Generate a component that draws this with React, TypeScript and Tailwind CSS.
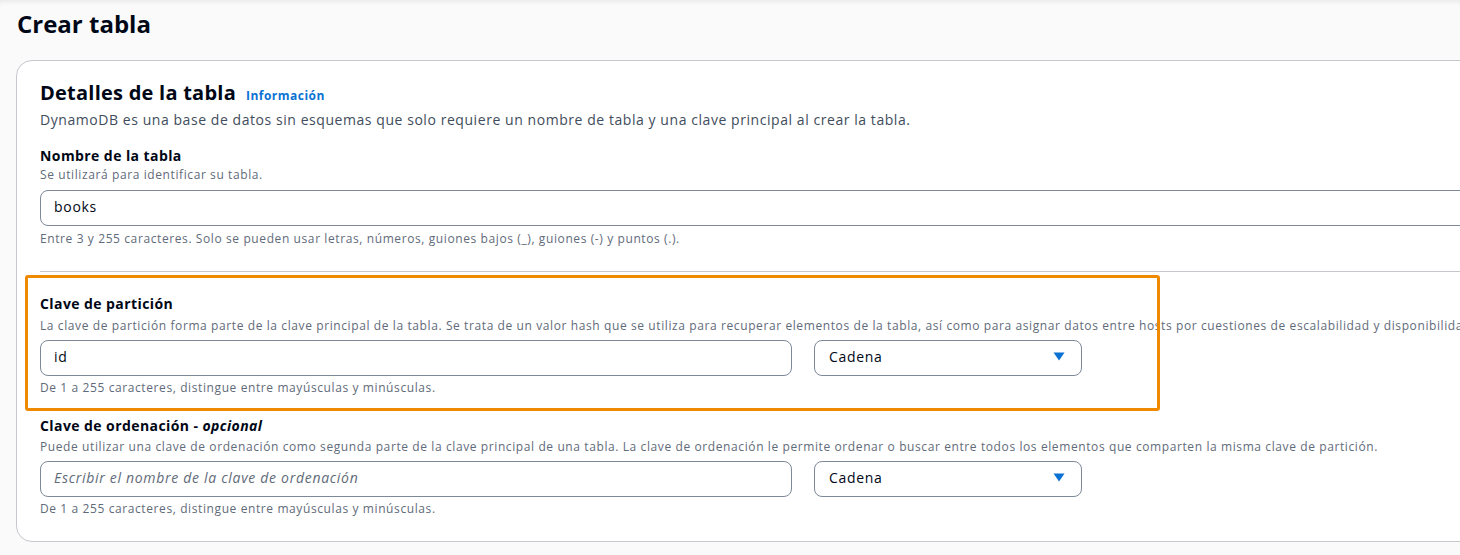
import React from "react";

const font = { fontFamily: '"Open Sans", "Noto Sans", Arial, sans-serif' };

const Caret = () => (
  <svg width="12" height="9" viewBox="0 0 12 9" className="shrink-0">
    <path d="M0.5 0.5 H11.5 L6 8.5 Z" fill="#0972d3" />
  </svg>
);

const TypeSelect = () => (
  <div className="flex h-[36px] w-[268px] items-center justify-between rounded-[8px] border border-[#7d8998] bg-white pb-[3px] pl-[14px] pr-[16px] text-[14px] tracking-[0.05em] text-[#000716]">
    <span>Cadena</span>
    <Caret />
  </div>
);

const App = () => {
  return (
    <div
      className="relative h-[555px] w-full overflow-hidden bg-[#fafafa] shadow-[inset_0_5px_5px_-3px_rgba(0,0,0,0.07)]"
      style={font}
    >
      <h1 className="pl-[17px] pt-[9px] text-[24px] font-bold leading-[30px] text-[#000716]">
        Crear tabla
      </h1>

      <div className="ml-[16px] mt-[21px] w-[1600px] rounded-[16px] border border-[#c6c6cd] bg-white pb-[24px] pl-[23px] pt-[20px]">
        {/* Encabezado */}
        <div className="flex items-baseline gap-[10px]">
          <h2 className="text-[20px] font-bold leading-[24px] tracking-[0.012em] text-[#000716]">
            Detalles de la tabla
          </h2>
          <span className="text-[12px] font-bold tracking-[0.04em] text-[#0972d3]">Información</span>
        </div>
        <p className="mt-[5px] text-[14px] leading-[20px] tracking-[0.04em] text-[#414d5c]">
          DynamoDB es una base de datos sin esquemas que solo requiere un nombre de tabla y una clave principal al crear la tabla.
        </p>

        {/* Nombre de la tabla */}
        <div className="mt-[16px] w-[1576px]">
          <div className="text-[14px] font-bold leading-[20px] tracking-[0.03em] text-[#000716]">Nombre de la tabla</div>
          <div className="mt-[1px] text-[12px] leading-[16px] tracking-[0.05em] text-[#5f6b7a]">
            Se utilizará para identificar su tabla.
          </div>
          <div className="mt-[7px] flex h-[36px] items-center rounded-[8px] border border-[#7d8998] pb-[3px] pl-[13px] text-[14px] tracking-[0.05em] text-[#000716]">
            books
          </div>
          <div className="mt-[5px] text-[12px] leading-[16px] tracking-[0.05em] text-[#5f6b7a]">
            Entre 3 y 255 caracteres. Solo se pueden usar letras, números, guiones bajos (_), guiones (-) y puntos (.).
          </div>
        </div>

        <div className="mt-[24px] h-px w-[1576px] bg-[#c6c6cd]" />

        {/* Clave de partición */}
        <div className="relative mt-[22px]">
          <div className="text-[14px] font-bold leading-[20px] tracking-[0.03em] text-[#000716]">Clave de partición</div>
          <div className="mt-[4px] whitespace-nowrap text-[12px] leading-[16px] tracking-[0.05em] text-[#5f6b7a]">
            La clave de partición forma parte de la clave principal de la tabla. Se trata de un valor hash que se utiliza para recuperar elementos de la tabla, así como para asignar datos entre hosts por cuestiones de escalabilidad y disponibilidad.
          </div>
          <div className="mt-[6px] flex gap-[22px]">
            <div className="flex h-[36px] w-[752px] items-center rounded-[8px] border border-[#7d8998] pb-[3px] pl-[13px] text-[14px] tracking-[0.05em] text-[#000716]">
              id
            </div>
            <TypeSelect />
          </div>
          <div className="mt-[4px] text-[12px] leading-[16px] tracking-[0.05em] text-[#5f6b7a]">
            De 1 a 255 caracteres, distingue entre mayúsculas y minúsculas.
          </div>
          <div className="pointer-events-none absolute left-[-15px] top-[-19px] h-[136px] w-[1135px] rounded-[3px] border-[3px] border-[#ef8a00]" />
        </div>

        {/* Clave de ordenación */}
        <div className="mt-[20px]">
          <div className="text-[14px] font-bold leading-[20px] tracking-[0.03em] text-[#000716]">
            Clave de ordenación - <span className="italic">opcional</span>
          </div>
          <div className="mt-[3px] whitespace-nowrap text-[12px] leading-[16px] tracking-[0.05em] text-[#5f6b7a]">
            Puede utilizar una clave de ordenación como segunda parte de la clave principal de una tabla. La clave de ordenación le permite ordenar o buscar entre todos los elementos que comparten la misma clave de partición.
          </div>
          <div className="mt-[6px] flex gap-[22px]">
            <div className="flex h-[36px] w-[752px] items-center rounded-[8px] border border-[#7d8998] pb-[3px] pl-[13px] text-[14px] italic tracking-[0.05em] text-[#5f6b7a]">
              Escribir el nombre de la clave de ordenación
            </div>
            <TypeSelect />
          </div>
          <div className="mt-[4px] text-[12px] leading-[16px] tracking-[0.05em] text-[#5f6b7a]">
            De 1 a 255 caracteres, distingue entre mayúsculas y minúsculas.
          </div>
        </div>
      </div>
    </div>
  );
};

export default App;
